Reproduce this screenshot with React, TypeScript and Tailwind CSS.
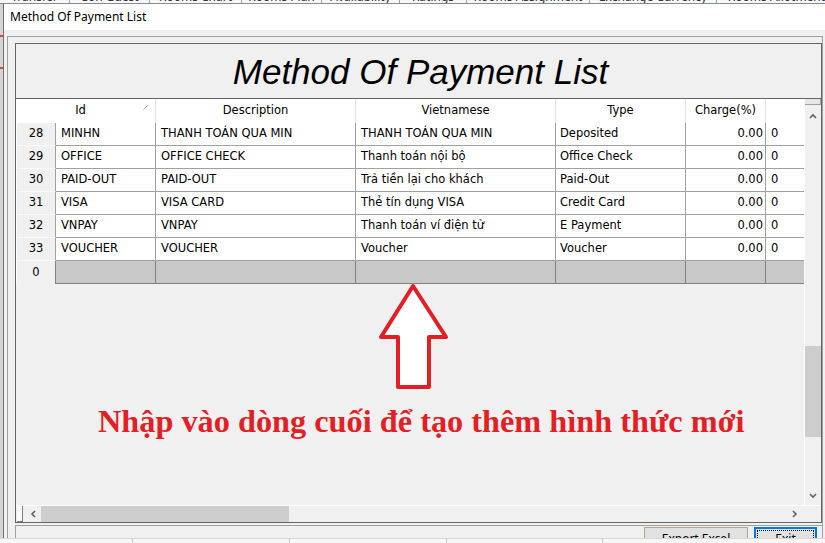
import React from "react";

const rows = [
  ["28", "MINHN", "THANH TOÁN QUA MIN", "THANH TOÁN QUA MIN", "Deposited"],
  ["29", "OFFICE", "OFFICE CHECK", "Thanh toán nội bộ", "Office Check"],
  ["30", "PAID-OUT", "PAID-OUT", "Trả tiền lại cho khách", "Paid-Out"],
  ["31", "VISA", "VISA CARD", "Thẻ tín dụng VISA", "Credit Card"],
  ["32", "VNPAY", "VNPAY", "Thanh toán ví điện tử", "E Payment"],
  ["33", "VOUCHER", "VOUCHER", "Voucher", "Voucher"],
];

const tabs = [
  { w: 70, t: "Transfer" },
  { w: 80, t: "Con Guest" },
  { w: 92, t: "Rooms Chart" },
  { w: 80, t: "Rooms Plan" },
  { w: 78, t: "Availability" },
  { w: 67, t: "Ratings" },
  { w: 123, t: "Rooms Assignment" },
  { w: 127, t: "Exchange Currency" },
  { w: 120, t: "Rooms Allotment" },
];

function Chevron({ dir }: { dir: "up" | "down" | "left" | "right" }) {
  const d =
    dir === "up"
      ? "M1 5 L4 2 L7 5"
      : dir === "down"
      ? "M1 2 L4 5 L7 2"
      : dir === "left"
      ? "M5 1 L2 4 L5 7"
      : "M2 1 L5 4 L2 7";
  return (
    <svg width="8" height="8" viewBox="0 0 8 8">
      <path d={d} fill="none" stroke="#606060" strokeWidth="1.6" />
    </svg>
  );
}

export default function App() {
  const grid = { fontFamily: '"DejaVu Sans", Tahoma, sans-serif' };
  return (
    <div
      className="relative w-[825px] h-[543px] overflow-hidden bg-[#f0f0f0] flex flex-col"
      style={{ fontFamily: '"Noto Sans", "Liberation Sans", sans-serif' }}
    >
      {/* background app tab strip */}
      <div className="h-[4px] shrink-0 flex overflow-hidden bg-[#f6f7f9] border-b border-[#8a8a8a]">
        {tabs.map((t, i) => (
          <div
            key={i}
            className="shrink-0 border-r border-[#9aa4b0] flex justify-center overflow-hidden"
            style={{ width: t.w }}
          >
            <span className="text-[12px] leading-[12px] mt-[-9px] text-[#333] whitespace-nowrap">
              {t.t}
            </span>
          </div>
        ))}
      </div>

      <div className="flex flex-1 min-h-0">
        <div className="w-[3px] shrink-0 bg-[#d4d4d4] flex flex-col">
          <div className="h-[31px]" />
          <div className="h-[2px] bg-[#e04040]" />
          <div className="h-[30px]" />
          <div className="h-[2px] bg-[#e04040]" />
        </div>
        <div className="flex-1 min-w-0 border-l border-[#707070] flex flex-col overflow-hidden">
          {/* title bar */}
          <div className="h-[26px] shrink-0 bg-white pl-[6px] flex items-center text-[12px] text-black">
            Method Of Payment List
          </div>
          {/* body */}
          <div className="flex-1 bg-[#f0f0f0] pl-[3px] pt-[6px] pr-[2px]">
            <div className="h-full border-l border-t border-r border-[#a0a0a0] pl-[7px] pt-[6px] flex flex-col">
              {/* inner box */}
              <div className="border border-[#646464] flex flex-col bg-[#f0f0f0]">
                <div className="h-[55px] border-b border-[#646464] flex items-center justify-center">
                  <span
                    className="italic text-[35px] text-black mt-[3px] ml-[4px]"
                    style={{ fontFamily: '"Liberation Sans", Arial, sans-serif' }}
                  >
                    Method Of Payment List
                  </span>
                </div>
                {/* grid */}
                <div className="flex h-[406px]">
                  <div className="flex-1 min-w-0 flex flex-col text-[11.5px] text-black" style={grid}>
                    {/* header */}
                    <div className="h-[24px] flex bg-white">
                      <div className="w-[140px] border-r border-[#e3e3e3] relative flex items-center justify-center pr-[10px]">
                        Id
                        <svg className="absolute right-[7px] top-[6px]" width="5" height="5" viewBox="0 0 5 5">
                          <path d="M0.5 4.5 L4.5 0.5" stroke="#a0a0a0" strokeWidth="1" />
                        </svg>
                      </div>
                      <div className="w-[200px] border-r border-[#e3e3e3] flex items-center justify-center">
                        Description
                      </div>
                      <div className="w-[200px] border-r border-[#e3e3e3] flex items-center justify-center">
                        Vietnamese
                      </div>
                      <div className="w-[130px] border-r border-[#e3e3e3] flex items-center justify-center">
                        Type
                      </div>
                      <div className="w-[80px] border-r border-[#e3e3e3] flex items-center justify-center">
                        Charge(%)
                      </div>
                      <div className="flex-1" />
                    </div>
                    {rows.map((r) => (
                      <div key={r[0]} className="h-[23px] flex">
                        <div className="w-[40px] shrink-0 bg-[#f0f0f0] border-l border-white border-b border-b-[#fafafa] border-r border-r-[#a0a0a0] flex items-center justify-center">
                          {r[0]}
                        </div>
                        <div className="w-[100px] shrink-0 bg-white border-r border-b border-[#a0a0a0] flex items-center pl-[5px] whitespace-nowrap">
                          {r[1]}
                        </div>
                        <div className="w-[200px] shrink-0 bg-white border-r border-b border-[#a0a0a0] flex items-center pl-[5px] whitespace-nowrap">
                          {r[2]}
                        </div>
                        <div className="w-[200px] shrink-0 bg-white border-r border-b border-[#a0a0a0] flex items-center pl-[5px] whitespace-nowrap">
                          {r[3]}
                        </div>
                        <div className="w-[130px] shrink-0 bg-white border-r border-b border-[#a0a0a0] flex items-center pl-[4px] whitespace-nowrap">
                          {r[4]}
                        </div>
                        <div className="w-[80px] shrink-0 bg-white border-r border-b border-[#a0a0a0] flex items-center justify-end pr-[2px]">
                          0.00
                        </div>
                        <div className="flex-1 bg-white border-b border-[#a0a0a0] flex items-center pl-[5px]">
                          0
                        </div>
                      </div>
                    ))}
                    <div className="h-[23px] flex">
                      <div className="w-[40px] shrink-0 bg-[#f0f0f0] border-l border-white border-r border-r-[#808080] flex items-center justify-center">
                        0
                      </div>
                      <div className="w-[100px] shrink-0 bg-[#c8c8c8] border-r border-b border-[#808080]" />
                      <div className="w-[200px] shrink-0 bg-[#c8c8c8] border-r border-b border-[#808080]" />
                      <div className="w-[200px] shrink-0 bg-[#c8c8c8] border-r border-b border-[#808080]" />
                      <div className="w-[130px] shrink-0 bg-[#c8c8c8] border-r border-b border-[#808080]" />
                      <div className="w-[80px] shrink-0 bg-[#c8c8c8] border-r border-b border-[#808080]" />
                      <div className="flex-1 bg-[#c8c8c8] border-b border-[#808080]" />
                    </div>
                    <div className="flex-1 bg-[#f0f0f0]" />
                  </div>
                  {/* vertical scrollbar */}
                  <div className="w-[17px] shrink-0 bg-[#f0f0f0] border-l border-white flex flex-col items-center">
                    <div className="w-full h-[6px] bg-[#e6e6e6] border-b border-r border-[#a0a0a0]" />
                    <div className="mt-[8px]">
                      <Chevron dir="up" />
                    </div>
                    <div className="mt-[225px] w-full h-[91px] bg-[#cdcdcd]" />
                    <div className="mt-[55px]">
                      <Chevron dir="down" />
                    </div>
                  </div>
                </div>
                {/* horizontal scrollbar */}
                <div className="h-[17px] flex border-t border-white">
                  <div className="flex-1 flex items-center">
                    <div className="w-[6px] h-[16px] ml-[1px] bg-[#fafafa] border-r border-b border-[#808080]" />
                    <div className="ml-[7px]">
                      <Chevron dir="left" />
                    </div>
                    <div className="ml-[3px] w-[248px] h-[16px] bg-[#cdcdcd]" />
                    <div className="flex-1" />
                    <div className="mr-[5px]">
                      <Chevron dir="right" />
                    </div>
                  </div>
                  <div className="w-[17px] bg-[#f0f0f0]" />
                </div>
              </div>
              {/* button panel */}
              <div className="mt-[2px] flex-1 border-t border-l border-[#a0a0a0] flex justify-end gap-[6px] pt-[1px] pr-[5px]">
                <div className="w-[104px] h-[24px] bg-[#e1e1e1] border border-[#b4a48c] flex items-center justify-center text-[12px] text-black">
                  Export Excel
                </div>
                <div className="w-[63px] h-[24px] bg-[#e1e1e1] border-2 border-[#0078d7] p-[1px]">
                  <div className="w-full h-full border border-dotted border-black flex items-center justify-center text-[12px] text-black">
                    Exit
                  </div>
                </div>
              </div>
            </div>
          </div>
        </div>
      </div>

      {/* bottom background strip */}
      <div className="h-[5px] shrink-0 bg-[#f7f7f7] border-t border-[#d8d8d8] flex">
        <div className="w-[133px] border-r border-[#c8c8c8]" />
        <div className="w-[157px] border-r border-[#c8c8c8]" />
        <div className="w-[157px] border-r border-[#c8c8c8]" />
        <div className="w-[156px] border-r border-[#c8c8c8]" />
        <div className="flex-1" />
      </div>

      {/* annotation overlay */}
      <svg className="absolute left-0 top-0 pointer-events-none" width="825" height="543">
        <polygon
          points="413,286 446,337 429,337 429,387 398,387 398,337 381,337"
          fill="#ffffff"
          stroke="#e31e24"
          strokeWidth="4"
          strokeLinejoin="round"
        />
      </svg>
      <div
        className="absolute left-[98px] top-[403px] text-[32.3px] leading-[36px] font-bold text-[#e31e24] whitespace-nowrap"
        style={{ fontFamily: '"Liberation Serif", "Times New Roman", serif' }}
      >
        Nhập vào dòng cuối để tạo thêm hình thức mới
      </div>
    </div>
  );
}
